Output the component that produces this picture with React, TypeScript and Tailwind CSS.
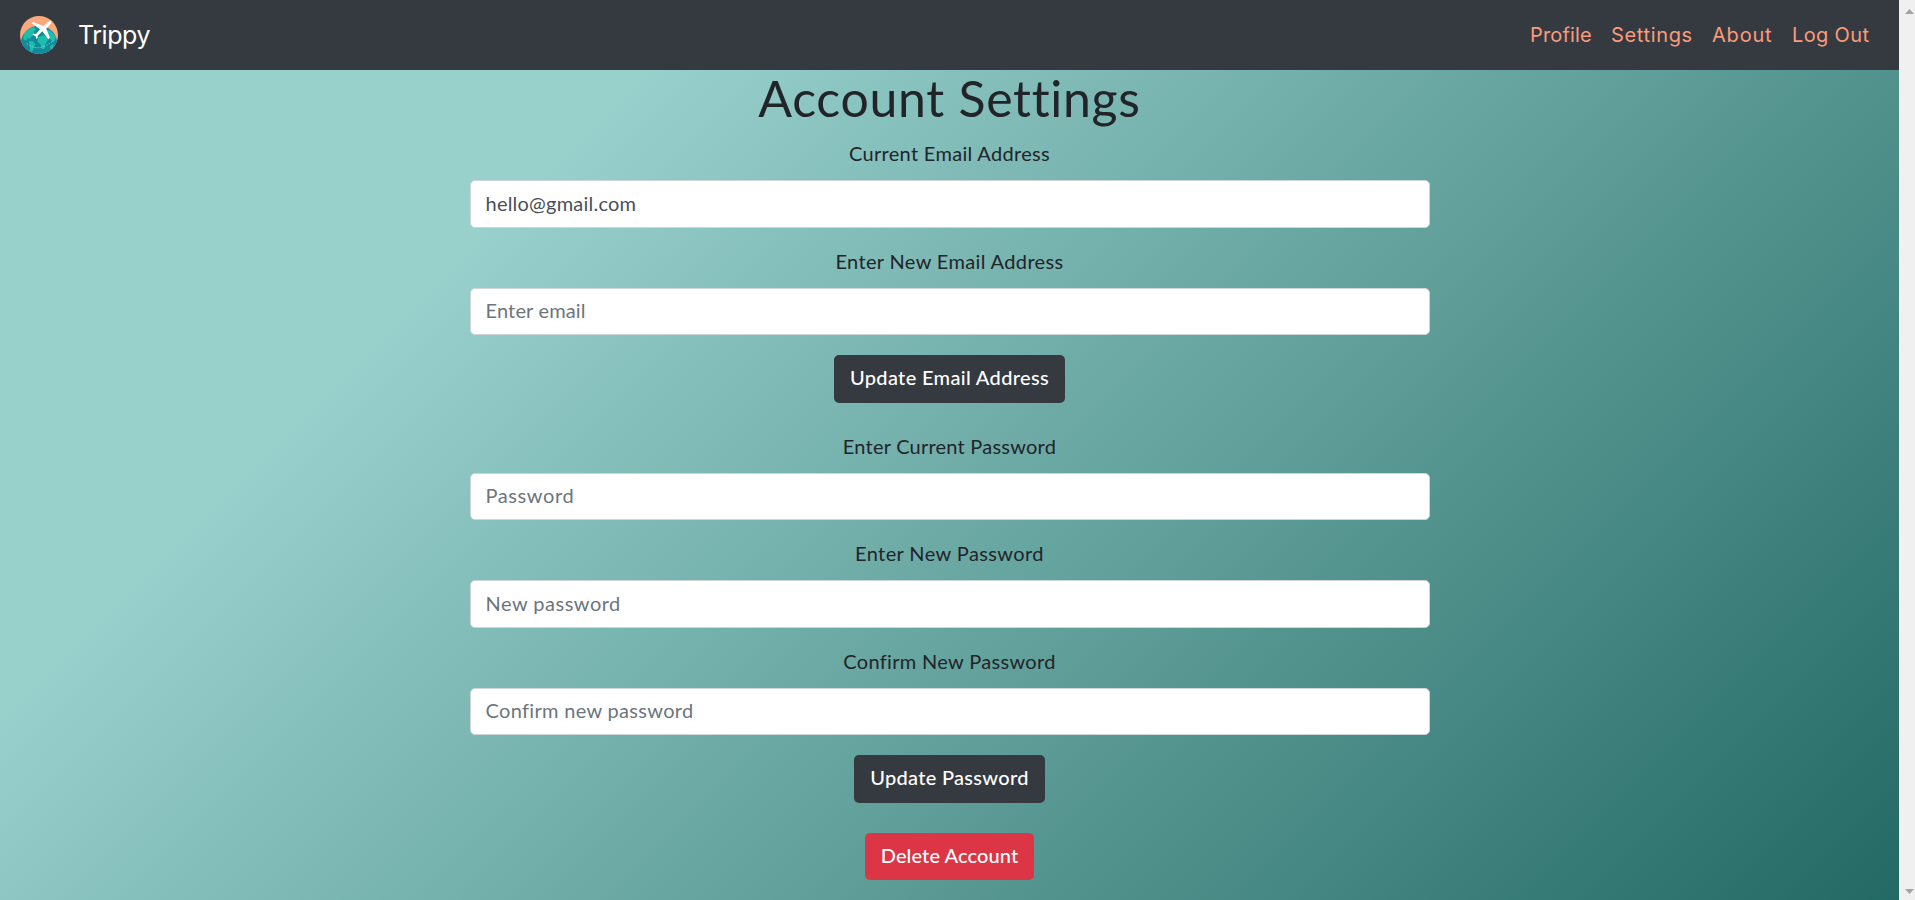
import type { ReactNode } from "react";

function Logo() {
  return (
    <svg className="size-[38px]" viewBox="0 0 114 114" aria-hidden="true">
      <defs>
        <clipPath id="badge">
          <circle cx="57" cy="57" r="57" />
        </clipPath>
        <clipPath id="globe">
          <circle cx="57" cy="84" r="55" />
        </clipPath>
      </defs>
      <g clipPath="url(#badge)">
        <rect width="114" height="114" fill="#fba97c" />
        <circle cx="57" cy="84" r="55" fill="#128a9b" />
        <g clipPath="url(#globe)" fill="#1cbfae">
          <path d="M12 50 L30 36 L42 34 L48 40 L40 48 L46 54 L36 60 L30 68 L22 66 L20 74 L10 70 Z" />
          <path d="M26 76 L38 76 L46 84 L42 94 L36 108 L30 104 L30 90 Z" />
          <path d="M56 62 L72 58 L84 66 L82 76 L76 84 L74 98 L66 100 L62 86 L52 76 Z" />
          <path d="M70 40 L92 44 L108 62 L102 78 L92 72 L88 62 L76 56 Z" />
          <path d="M92 88 L102 84 L98 98 L90 98 Z" />
        </g>
        <path d="M20 82 Q54 112 100 74" fill="none" stroke="#b5e8e3" strokeWidth="2" strokeDasharray="5 4" />
      </g>
      <path
        d="M94 14 C88 14 83 18 78 23 L70 30 L40 18 L35 22 L60 40 L48 54 L40 53 L37 56 L46 60 L50 69 L53 66 L53 59 L67 46 L85 70 L90 66 L79 38 L87 29 C92 24 95 19 94 14 Z"
        fill="#fff"
      />
    </svg>
  );
}

function NavLink({ children, className }: { children: ReactNode; className: string }) {
  return (
    <a href="#" className={`text-[20px] leading-[30px] whitespace-nowrap text-[#fd9a7b] ${className}`}>
      {children}
    </a>
  );
}

type FieldProps = {
  label: string;
  labelClass: string;
  placeholder?: string;
  value?: string;
  inputClass: string;
};

function Field({ label, labelClass, placeholder, value, inputClass }: FieldProps) {
  return (
    <label className="flex w-full flex-col items-center">
      <span className={`mb-[13px] text-[20px] leading-[27px] text-[#212529] ${labelClass}`}>{label}</span>
      <input
        className={`h-[47.5px] w-full rounded-[5px] border border-[#ced4da] bg-white px-[15px] pb-[2px] text-[20px] text-[#495057] placeholder:text-[#6c757d] ${inputClass}`}
        placeholder={placeholder}
        defaultValue={value}
      />
    </label>
  );
}

function Button({ children, className }: { children: ReactNode; className: string }) {
  return (
    <button
      type="button"
      className={`h-[47.5px] rounded-[5px] pb-[3px] text-center text-[20px] font-medium whitespace-nowrap text-white ${className}`}
    >
      {children}
    </button>
  );
}

export default function App() {
  return (
    <div className="flex h-[900px] overflow-hidden font-['Lato',sans-serif]">
      <div className="flex flex-1 flex-col bg-[linear-gradient(135deg,#98d0cc_25.3%,#236964_100%)]">
        <nav className="flex h-[70px] shrink-0 items-center bg-[#343a40] pr-[30px] pl-5 font-['Inter',sans-serif]">
          <Logo />
          <span className="ml-5 text-[25px] leading-[38px] tracking-[-0.45px] text-white">Trippy</span>
          <div className="ml-auto flex gap-5">
            <NavLink className="w-[61px] tracking-[0.15px]">Profile</NavLink>
            <NavLink className="w-[81px] tracking-[0.65px]">Settings</NavLink>
            <NavLink className="w-[60px] tracking-[0.8px]">About</NavLink>
            <NavLink className="w-[77px] tracking-[0.35px]">Log Out</NavLink>
          </div>
        </nav>

        <main className="mx-auto flex w-[960px] flex-col items-center">
          <h1 className="mb-[14px] text-[50px] leading-[56px] tracking-[0.7px] text-[#212529]">Account Settings</h1>
          <form className="flex w-full flex-col items-center">
            <div className="flex w-full flex-col gap-5">
              <Field
                label="Current Email Address"
                labelClass="tracking-[0.31px]"
                value="hello@gmail.com"
                inputClass="tracking-[0.22px]"
              />
              <Field
                label="Enter New Email Address"
                labelClass="tracking-[0.36px]"
                placeholder="Enter email"
                inputClass="tracking-[0.16px]"
              />
            </div>
            <Button className="mt-5 w-[231px] bg-[#343a40] tracking-[0.34px]">Update Email Address</Button>
          </form>
          <form className="mt-[30px] flex w-full flex-col items-center">
            <div className="flex w-full flex-col gap-5">
              <Field
                label="Enter Current Password"
                labelClass="tracking-[0.23px]"
                placeholder="Password"
                inputClass="tracking-[0.6px]"
              />
              <Field
                label="Enter New Password"
                labelClass="tracking-[0.4px]"
                placeholder="New password"
                inputClass="tracking-[0.5px]"
              />
              <Field
                label="Confirm New Password"
                labelClass="tracking-[0.32px]"
                placeholder="Confirm new password"
                inputClass="tracking-[0.32px]"
              />
            </div>
            <Button className="mt-5 w-[191px] bg-[#343a40] tracking-[0.3px]">Update Password</Button>
          </form>
          <Button className="mt-[30px] w-[169px] bg-[#dc3545] tracking-[0.1px]">Delete Account</Button>
        </main>
      </div>

      <div className="flex w-4 shrink-0 flex-col items-end justify-between bg-[#f0f0f0] pt-[9px] pr-px pb-[6px]">
        <svg className="h-[5px] w-[9px]" viewBox="0 0 9 5" fill="#a3a3a3">
          <path d="M0 5 L4.5 0 L9 5 Z" />
        </svg>
        <svg className="h-[5px] w-[9px]" viewBox="0 0 9 5" fill="#a3a3a3">
          <path d="M0 0 L9 0 L4.5 5 Z" />
        </svg>
      </div>
    </div>
  );
}
